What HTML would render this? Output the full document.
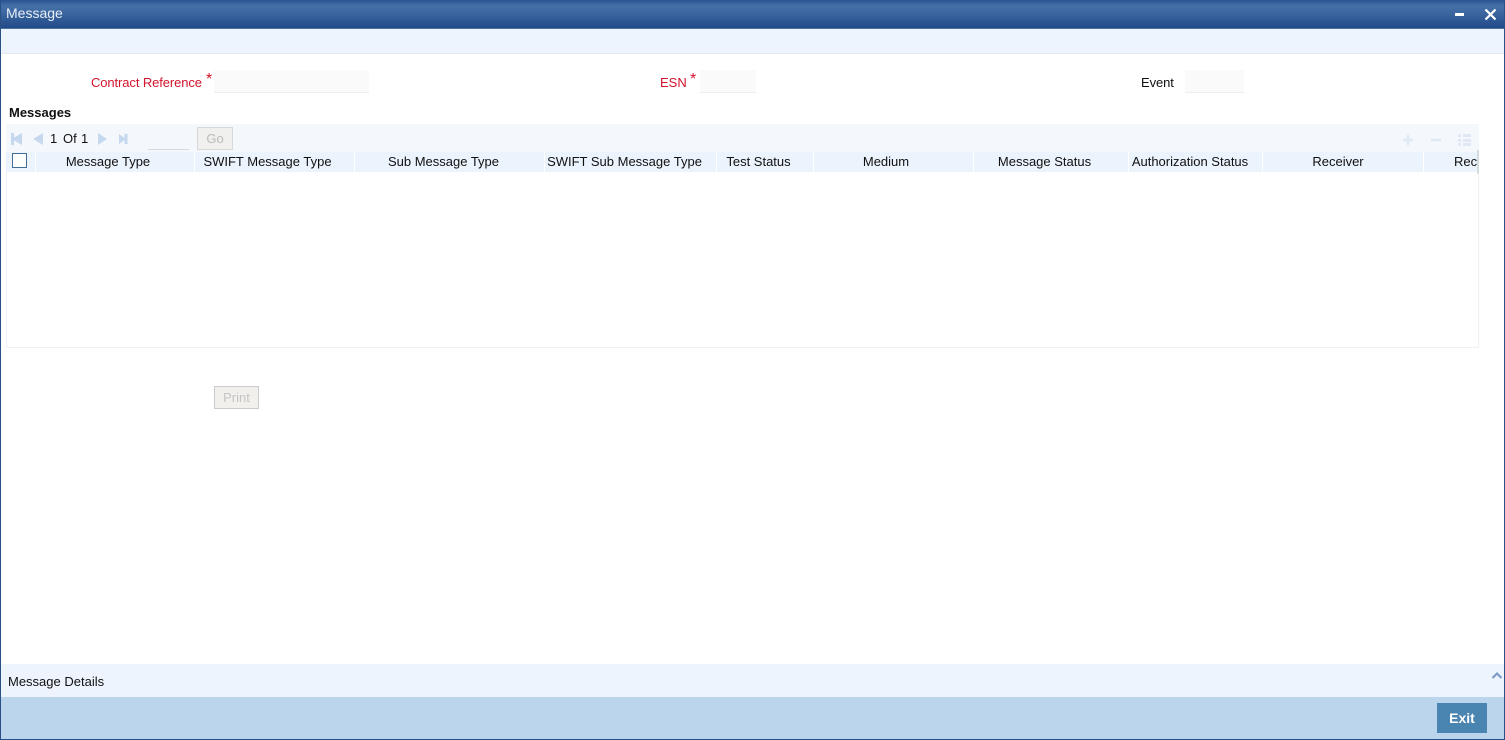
<!DOCTYPE html>
<html><head><meta charset="utf-8"><style>
html,body{margin:0;padding:0;background:#fff}
#r{position:relative;width:1505px;height:740px;overflow:hidden;background:#fff;font-family:"Liberation Sans",Arial,sans-serif;font-size:13px;color:#111}
#r div,#r span.a{position:absolute;box-sizing:border-box}
.t{white-space:nowrap;line-height:16px}
.c{text-align:center}
.red{color:#d2142c}
.inp{background:#fafafa;border-bottom:1px solid #eceef0}
.h{top:152px;height:20px;background:#ebf3fc;text-align:center;line-height:19px;white-space:nowrap;overflow:hidden}
</style></head><body><div id="r">
<div style="left:0;top:0;width:1505px;height:29px;background:linear-gradient(#2a5390 0,#4470a8 6px,#3d68a1 12px,#234c89 27px,#1f477f 28px,#7f9cc0 29px)"></div>
<div class="t" style="left:6px;top:5px;color:#e8eef6;font-size:14px">Message</div>
<div style="left:1455px;top:13px;width:9px;height:3px;background:#fff"></div>
<svg style="position:absolute;left:1484px;top:8px" width="13" height="13" viewBox="0 0 13 13"><path d="M1.500 1.500L11.500 11.500M11.500 1.500L1.500 11.500" stroke="#fff" stroke-width="2.200" fill="none"/></svg>

<div style="left:0;top:29px;width:1505px;height:25px;background:#edf4fd;border-bottom:1px solid #e4e7eb"></div>

<div class="t red" style="left:91px;top:75px;letter-spacing:-0.1px">Contract Reference</div>
<div class="t red" style="left:206px;top:72px;font-size:16px">*</div>
<div class="inp" style="left:214px;top:70px;width:155px;height:23px"></div>
<div class="t red" style="left:660px;top:75px">ESN</div>
<div class="t red" style="left:690px;top:72px;font-size:16px">*</div>
<div class="inp" style="left:700px;top:70px;width:56px;height:23px"></div>
<div class="t" style="left:1141px;top:75px;letter-spacing:-0.1px">Event</div>
<div class="inp" style="left:1185px;top:70px;width:59px;height:23px"></div>

<div class="t" style="left:9px;top:105px;font-weight:bold">Messages</div>

<div style="left:6px;top:124px;width:1473px;height:224px;border:1px solid #f0f1f2;border-top:0"></div>
<div style="left:6px;top:124px;width:1473px;height:28px;background:#f4f8fd"></div>

<svg style="position:absolute;left:10px;top:132px" width="125" height="14" viewBox="0 0 125 14">
<path d="M1 1h3v4.500L12 1v12L4 8.500V13H1z" fill="#c5d8ee"/>
<path d="M23 7L33 1v12z" fill="#c5d8ee"/>
<path d="M88 1v12l9-6z" fill="#c5d8ee"/>
<path d="M109 2v10l5.500-4v4h3V2h-3v4z" fill="#c5d8ee"/>
</svg>
<div class="t" style="left:50px;top:131px">1</div>
<div class="t" style="left:63px;top:131px">Of</div>
<div class="t" style="left:81px;top:131px">1</div>
<div style="left:148px;top:149px;width:41px;height:1px;background:#d6dbe0"></div>
<div class="c" style="left:197px;top:127px;width:36px;height:23px;background:#f0f0ee;border:1px solid #d8d8d8;color:#bbb;line-height:22px">Go</div>

<svg style="position:absolute;left:1400px;top:133px" width="73" height="14" viewBox="0 0 73 14">
<path d="M8 2v10M3 7h10" stroke="#dfe8f3" stroke-width="2.500" fill="none"/>
<path d="M31 7h10" stroke="#dfe8f3" stroke-width="2.500" fill="none"/>
<path d="M58 1h3v3h-3zM63 1h8v3h-8zM58 6h3v3h-3zM63 6h8v3h-8zM58 10h3v3h-3zM63 10h8v3h-8z" fill="#dfe8f3"/>
</svg>

<div class="h" style="left:6px;width:29px"></div>
<div style="left:12px;top:153px;width:15px;height:15px;background:#fff;border:1px solid #3f6d96"></div>
<div class="h" style="left:36px;width:158px;padding-right:14px">Message Type</div>
<div class="h" style="left:195px;width:159px;padding-right:14px">SWIFT Message Type</div>
<div class="h" style="left:355px;width:189px;padding-right:12px">Sub Message Type</div>
<div class="h" style="left:545px;width:171px;padding-right:12px">SWIFT Sub Message Type</div>
<div class="h" style="left:717px;width:96px;padding-right:13px">Test Status</div>
<div class="h" style="left:814px;width:159px;padding-right:15px">Medium</div>
<div class="h" style="left:974px;width:154px;padding-right:13px">Message Status</div>
<div class="h" style="left:1129px;width:133px;padding-right:11px">Authorization Status</div>
<div class="h" style="left:1263px;width:160px;padding-right:10px">Receiver</div>
<div class="h" style="left:1424px;width:53px;text-align:left;padding-left:30px">Rec</div>
<div style="left:1477px;top:150px;width:2px;height:24px;background:#d3dde0"></div>

<div class="c" style="left:214px;top:386px;width:45px;height:23px;background:#f1f0ec;border:1px solid #cbcbcb;color:#c4c4c4;line-height:21px">Print</div>

<div style="left:0;top:664px;width:1505px;height:33px;background:#edf4fd"></div>
<div class="t" style="left:8px;top:674px">Message Details</div>
<svg style="position:absolute;left:1491px;top:671px" width="12" height="9" viewBox="0 0 12 9"><path d="M1.500 7L6 2.500L10.500 7" stroke="#7d9cc8" stroke-width="2.200" fill="none"/></svg>

<div style="left:0;top:697px;width:1505px;height:43px;background:#bbd6ec"></div>
<div class="c" style="left:1437px;top:703px;width:50px;height:30px;background:#4a84b0;color:#fff;font-weight:bold;font-size:14px;line-height:30px">Exit</div>

<div style="left:0;top:0;width:1px;height:740px;background:#2a5186"></div>
<div style="left:1504px;top:0;width:1px;height:740px;background:#2a5186"></div>
<div style="left:0;top:739px;width:1505px;height:1px;background:#2a5186"></div>
</div></body></html>
